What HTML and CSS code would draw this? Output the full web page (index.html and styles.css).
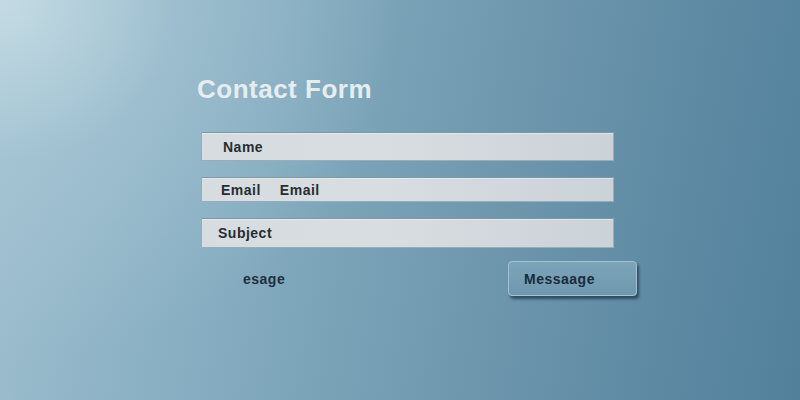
FILE: index.html
```html
<!DOCTYPE html>
<html>
<head>
<meta charset="utf-8">
<link rel="stylesheet" href="styles.css">
</head>
<body>
<div class="page">
  <h1 class="title">Contact Form</h1>
  <div class="fields">
    <div class="field field-name"><span class="label">Name</span></div>
    <div class="field field-email"><span class="label">Email</span><span class="label">Email</span></div>
    <div class="field field-subject"><span class="label">Subject</span></div>
    <div class="row">
      <span class="msg-label">esage</span>
      <div class="btn">Messaage</div>
    </div>
  </div>
</div>
</body>
</html>
```
FILE: styles.css
```css
html, body {
  margin: 0;
  padding: 0;
  width: 800px;
  height: 400px;
  overflow: hidden;
}
body {
  font-family: "Liberation Sans", Arial, sans-serif;
  background:
    radial-gradient(ellipse 400px 360px at 0px 0px, rgba(200,222,230,0.9) 0%, rgba(170,200,214,0.5) 45%, rgba(140,178,198,0) 100%),
    linear-gradient(100deg, #a0c0d0 0%, #86adc1 30%, #6f98ae 60%, #5c88a2 85%, #52809b 100%);
}
.page {
  display: flex;
  flex-direction: column;
  padding: 74px 0 0 197px;
}
.title {
  margin: 0;
  font-size: 26px;
  line-height: 30px;
  font-weight: bold;
  letter-spacing: 0.5px;
  color: #e6edf0;
}
.fields {
  display: flex;
  flex-direction: column;
  margin-top: 28px;
  margin-left: 4px;
  gap: 16px;
}
.field {
  box-sizing: border-box;
  width: 413px;
  display: flex;
  align-items: center;
  gap: 19px;
  background: linear-gradient(90deg, #d6dce0 0%, #d8dde1 45%, #cbd2d8 100%);
  border: 1px solid #98adba;
  border-top-color: #7e98aa;
  box-shadow: inset 0 1px 0 rgba(255,255,255,0.35);
}
.label {
  font-size: 14px;
  font-weight: bold;
  letter-spacing: 0.5px;
  color: #262d33;
}
.field-name { height: 29px; padding-left: 21px; }
.field-email { height: 25px; padding-left: 19px; }
.field-subject { height: 30px; padding-left: 16px; }
.row {
  width: 436px;
  display: flex;
  align-items: center;
  margin-top: -3px;
}
.msg-label {
  padding-left: 42px;
  font-size: 14px;
  font-weight: bold;
  letter-spacing: 0.5px;
  color: #1f2f3c;
}
.btn {
  box-sizing: border-box;
  margin-left: auto;
  width: 129px;
  height: 35px;
  display: flex;
  align-items: center;
  padding-left: 15px;
  font-size: 14px;
  font-weight: bold;
  letter-spacing: 0.5px;
  color: #1a2b3b;
  background: linear-gradient(180deg, #7ca4b9 0%, #6f98ae 100%);
  border: 1px solid #a3c3d2;
  border-radius: 4px;
  box-shadow: 2px 3px 3px rgba(25,45,65,0.7);
}
```
